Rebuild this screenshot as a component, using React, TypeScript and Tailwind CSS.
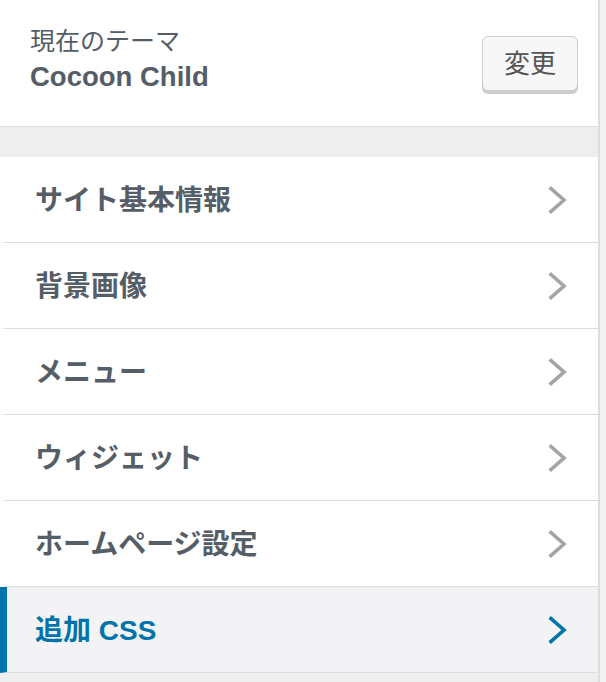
const FONT = "font-['Liberation_Sans','Noto_Sans_CJK_JP',sans-serif]"

const SECTIONS = [
  { label: "サイト基本情報", active: false },
  { label: "背景画像", active: false },
  { label: "メニュー", active: false },
  { label: "ウィジェット", active: false },
  { label: "ホームページ設定", active: false },
  { label: "追加 CSS", active: true },
]

function Chevron({ className }: { className: string }) {
  return (
    <svg width="20" height="28" viewBox="0 0 20 28" fill="none" className={className} aria-hidden="true">
      <polyline points="3,2.5 16,14 3,25.5" stroke="currentColor" strokeWidth="3.6" strokeLinecap="square" />
    </svg>
  )
}

export default function App() {
  return (
    <div className={`flex h-[682px] w-[606px] bg-[#f3f3f5] ${FONT}`}>
      <div className="flex w-[600px] flex-col border-r-2 border-[#dddddd] bg-[#eeeeee]">
        {/* Active theme */}
        <div className="flex h-[127px] shrink-0 items-start justify-between border-b border-[#dddddd] bg-white pl-[30px] pr-[20px]">
          <div className="flex flex-col pt-[26px] text-[#555d66]">
            <span className="text-[25px] leading-[30px]">現在のテーマ</span>
            <span className="mt-[4px] text-[27.5px] font-bold leading-[34px]">Cocoon Child</span>
          </div>
          <button className="mt-[36px] h-[55px] w-[96px] rounded-[6px] border border-[#cccccc] bg-[#f7f7f7] text-[26px] leading-none text-[#555555] shadow-[0_3px_0_#cccccc]">
            変更
          </button>
        </div>

        <div className="h-[30px] shrink-0" />

        {/* Sections */}
        <ul className="flex flex-col">
          {SECTIONS.map((s) => (
            <li
              key={s.label}
              className={`flex h-[86px] items-center justify-between border-b border-l-[7px] border-b-[#dddddd] pl-[28px] pr-[30px] ${
                s.active ? "border-l-[#0073aa] bg-[#f3f3f5] text-[#0073aa]" : "border-l-white bg-white text-[#555d66]"
              }`}
            >
              <span className="pt-[2px] text-[28px] font-bold leading-none">{s.label}</span>
              <Chevron className={s.active ? "text-[#0073aa]" : "text-[#a0a5aa]"} />
            </li>
          ))}
        </ul>
      </div>
    </div>
  )
}
